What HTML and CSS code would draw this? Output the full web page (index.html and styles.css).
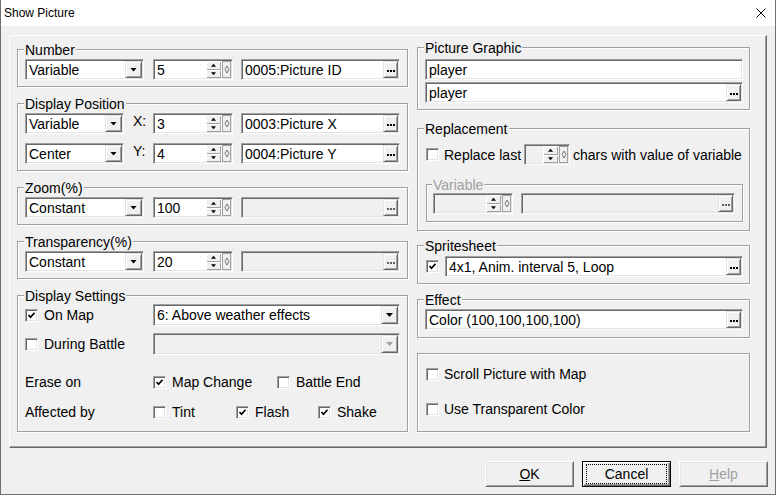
FILE: index.html
```
<!DOCTYPE html>
<html lang="en">
<head>
    <meta charset="UTF-8">
    <title>Show Picture</title>
    <link rel="stylesheet" href="styles.css">
</head>
<body>
<div class="window">
    <div class="titlebar">
        <span class="title">Show Picture</span>
        <svg class="close" width="10" height="10" viewBox="0 0 10 10"><path d="M0.5 0.5 L9.5 9.5 M9.5 0.5 L0.5 9.5" stroke="#000" stroke-width="1"/></svg>
    </div>
    <div class="client">
        <div class="panel">
            <div class="col col-left">
                <div class="group g-number">
                    <div class="group-title">Number</div>
                    <div class="row mt1">
                        <div class="field combo"><span class="text">Variable</span><span class="ddbtn"><i class="arrow"></i></span></div>
                        <div class="field spin"><span class="text">5</span><span class="spin-btns"><span class="sb"><i class="up"></i></span><span class="sb"><i class="down"></i></span></span><span class="spin-dia"><svg width="6" height="9" viewBox="0 0 6 9"><path d="M3 1 L5 4.5 L3 8 L1 4.5 Z" fill="none" stroke="#555" stroke-width="0.8"/></svg></span></div>
                        <div class="field var"><span class="text">0005:Picture ID</span><span class="dotbtn"><i class="dots"></i></span></div>
                    </div>
                </div>

                <div class="group g-position">
                    <div class="group-title">Display Position</div>
                    <div class="row mt1">
                        <div class="field combo narrow"><span class="text">Variable</span><span class="ddbtn"><i class="arrow"></i></span></div>
                        <span class="axis">X:</span>
                        <div class="field spin"><span class="text">3</span><span class="spin-btns"><span class="sb"><i class="up"></i></span><span class="sb"><i class="down"></i></span></span><span class="spin-dia"><svg width="6" height="9" viewBox="0 0 6 9"><path d="M3 1 L5 4.5 L3 8 L1 4.5 Z" fill="none" stroke="#555" stroke-width="0.8"/></svg></span></div>
                        <div class="field var"><span class="text">0003:Picture X</span><span class="dotbtn"><i class="dots"></i></span></div>
                    </div>
                    <div class="row mt9">
                        <div class="field combo narrow"><span class="text">Center</span><span class="ddbtn"><i class="arrow"></i></span></div>
                        <span class="axis">Y:</span>
                        <div class="field spin"><span class="text">4</span><span class="spin-btns"><span class="sb"><i class="up"></i></span><span class="sb"><i class="down"></i></span></span><span class="spin-dia"><svg width="6" height="9" viewBox="0 0 6 9"><path d="M3 1 L5 4.5 L3 8 L1 4.5 Z" fill="none" stroke="#555" stroke-width="0.8"/></svg></span></div>
                        <div class="field var"><span class="text">0004:Picture Y</span><span class="dotbtn"><i class="dots"></i></span></div>
                    </div>
                </div>

                <div class="group g-zoom">
                    <div class="group-title">Zoom(%)</div>
                    <div class="row mt1">
                        <div class="field combo"><span class="text">Constant</span><span class="ddbtn"><i class="arrow"></i></span></div>
                        <div class="field spin"><span class="text">100</span><span class="spin-btns"><span class="sb"><i class="up"></i></span><span class="sb"><i class="down"></i></span></span><span class="spin-dia"><svg width="6" height="9" viewBox="0 0 6 9"><path d="M3 1 L5 4.5 L3 8 L1 4.5 Z" fill="none" stroke="#555" stroke-width="0.8"/></svg></span></div>
                        <div class="field var off"><span class="text"></span><span class="dotbtn"><i class="dots"></i></span></div>
                    </div>
                </div>

                <div class="group g-trans">
                    <div class="group-title">Transparency(%)</div>
                    <div class="row mt1">
                        <div class="field combo"><span class="text">Constant</span><span class="ddbtn"><i class="arrow"></i></span></div>
                        <div class="field spin"><span class="text">20</span><span class="spin-btns"><span class="sb"><i class="up"></i></span><span class="sb"><i class="down"></i></span></span><span class="spin-dia"><svg width="6" height="9" viewBox="0 0 6 9"><path d="M3 1 L5 4.5 L3 8 L1 4.5 Z" fill="none" stroke="#555" stroke-width="0.8"/></svg></span></div>
                        <div class="field var off"><span class="text"></span><span class="dotbtn"><i class="dots"></i></span></div>
                    </div>
                </div>

                <div class="group g-display">
                    <div class="group-title">Display Settings</div>
                    <div class="row tall">
                        <label class="cb w128"><span class="check"><svg width="9" height="9" viewBox="0 0 9 9"><polyline points="1.5,4 3.5,6.3 7.5,1.8" fill="none" stroke="#000" stroke-width="1.7"/></svg></span>On Map</label>
                        <div class="field combo wide tall"><span class="text">6: Above weather effects</span><span class="ddbtn"><i class="arrow"></i></span></div>
                    </div>
                    <div class="row tall mt7">
                        <label class="cb w128"><span class="check"></span>During Battle</label>
                        <div class="field combo wide tall off"><span class="text"></span><span class="ddbtn"><i class="arrow"></i></span></div>
                    </div>
                    <div class="row tall mt16">
                        <span class="lbl w128">Erase on</span>
                        <label class="cb w124"><span class="check"><svg width="9" height="9" viewBox="0 0 9 9"><polyline points="1.5,4 3.5,6.3 7.5,1.8" fill="none" stroke="#000" stroke-width="1.7"/></svg></span>Map Change</label>
                        <label class="cb"><span class="check"></span>Battle End</label>
                    </div>
                    <div class="row tall mt8">
                        <span class="lbl w128">Affected by</span>
                        <label class="cb w83"><span class="check"></span>Tint</label>
                        <label class="cb w82"><span class="check"><svg width="9" height="9" viewBox="0 0 9 9"><polyline points="1.5,4 3.5,6.3 7.5,1.8" fill="none" stroke="#000" stroke-width="1.7"/></svg></span>Flash</label>
                        <label class="cb"><span class="check"><svg width="9" height="9" viewBox="0 0 9 9"><polyline points="1.5,4 3.5,6.3 7.5,1.8" fill="none" stroke="#000" stroke-width="1.7"/></svg></span>Shake</label>
                    </div>
                </div>
            </div>

            <div class="col col-right">
                <div class="group g-graphic">
                    <div class="group-title">Picture Graphic</div>
                    <div class="row mt3">
                        <div class="field full"><span class="text">player</span></div>
                    </div>
                    <div class="row mt2">
                        <div class="field full"><span class="text">player</span><span class="dotbtn"><i class="dots"></i></span></div>
                    </div>
                </div>

                <div class="group g-replace">
                    <div class="group-title">Replacement</div>
                    <div class="row mt7">
                        <label class="cb r ml1"><span class="check"></span>Replace last</label>
                        <div class="field spin small off"><span class="text"></span><span class="spin-btns"><span class="sb"><i class="up"></i></span><span class="sb"><i class="down"></i></span></span><span class="spin-dia"><svg width="6" height="9" viewBox="0 0 6 9"><path d="M3 1 L5 4.5 L3 8 L1 4.5 Z" fill="none" stroke="#555" stroke-width="0.8"/></svg></span></div>
                        <span class="after">chars with value of variable</span>
                    </div>
                    <div class="group sub">
                        <div class="group-title grey">Variable</div>
                        <div class="row">
                            <div class="field spin off first"><span class="text"></span><span class="spin-btns"><span class="sb"><i class="up"></i></span><span class="sb"><i class="down"></i></span></span><span class="spin-dia"><svg width="6" height="9" viewBox="0 0 6 9"><path d="M3 1 L5 4.5 L3 8 L1 4.5 Z" fill="none" stroke="#555" stroke-width="0.8"/></svg></span></div>
                            <div class="field var sub-var off"><span class="text"></span><span class="dotbtn"><i class="dots"></i></span></div>
                        </div>
                    </div>
                </div>

                <div class="group g-sprite">
                    <div class="group-title">Spritesheet</div>
                    <div class="row mt2">
                        <label class="cb r ml1"><span class="check"><svg width="9" height="9" viewBox="0 0 9 9"><polyline points="1.5,4 3.5,6.3 7.5,1.8" fill="none" stroke="#000" stroke-width="1.7"/></svg></span></label>
                        <div class="field sprite-edit"><span class="text">4x1, Anim. interval 5, Loop</span><span class="dotbtn"><i class="dots"></i></span></div>
                    </div>
                </div>

                <div class="group g-effect">
                    <div class="group-title">Effect</div>
                    <div class="row mt1">
                        <div class="field full"><span class="text">Color (100,100,100,100)</span><span class="dotbtn"><i class="dots"></i></span></div>
                    </div>
                </div>

                <div class="group g-misc">
                    <div class="row short">
                        <label class="cb r ml1"><span class="check"></span>Scroll Picture with Map</label>
                    </div>
                    <div class="row short mt19">
                        <label class="cb r ml1"><span class="check"></span>Use Transparent Color</label>
                    </div>
                </div>
            </div>
        </div>

        <div class="buttons">
            <button class="btn"><u>O</u>K</button>
            <button class="btn default"><span class="focus">Cancel</span></button>
            <button class="btn disabled"><u>H</u>elp</button>
        </div>
    </div>
</div>
</body>
</html>
```

FILE: styles.css
```
body {
    margin: 0;
    background: #f0f0f0;
    font-family: "Liberation Sans", Arial, sans-serif;
    font-size: 14px;
    color: #000;
}
.window {
    width: 776px;
    height: 495px;
    box-sizing: border-box;
    border: 1px solid #6f6f6f;
    border-top: none;
    display: flex;
    flex-direction: column;
    background: #f0f0f0;
}
.titlebar {
    flex: none;
    height: 26px;
    background: #fff;
    display: flex;
    align-items: center;
    justify-content: space-between;
    padding: 0 9px 0 3px;
    font-size: 12px;
}
.close {
    display: block;
}
.client {
    flex: 1;
    padding: 9px 0 0 8px;
}
.panel {
    width: 758px;
    height: 413px;
    box-sizing: border-box;
    border: 1px solid;
    border-color: #fff #696969 #696969 #fff;
    box-shadow: inset -1px -1px #a0a0a0;
    display: flex;
    gap: 9px;
    padding-left: 7px;
}
.col-left {
    width: 391px;
    padding-top: 13px;
}
.col-right {
    width: 333px;
    padding-top: 11px;
}

/* group boxes */
.group {
    box-sizing: border-box;
    border: 1px solid #a0a0a0;
    box-shadow: inset 1px 1px #fff, 1px 1px #fff;
    padding: 0 6px 0 7px;
    line-height: 16px;
}
.group-title {
    width: fit-content;
    height: 16px;
    margin: -8px 0 0 -1px;
    padding: 0 1px;
    background: #f0f0f0;
}
.group-title.grey {
    color: #a0a0a0;
}
.g-number { height: 38px; margin-bottom: 16px; }
.g-position { height: 68px; margin-bottom: 16px; }
.g-zoom { height: 38px; margin-bottom: 16px; }
.g-trans { height: 38px; margin-bottom: 16px; }
.g-display { height: 137px; }
.g-graphic { height: 63px; margin-bottom: 18px; }
.g-replace { height: 103px; margin-bottom: 14px; }
.g-sprite { height: 39px; margin-bottom: 15px; }
.g-effect { height: 39px; margin-bottom: 15px; }
.g-misc { height: 79px; padding-top: 12px; }
.group.sub {
    width: 317px;
    height: 38px;
    margin: 19px 0 0 1px;
    padding-left: 6px;
}

/* rows */
.row {
    display: flex;
    align-items: center;
    height: 21px;
}
.row.tall { height: 22px; }
.row.short { height: 16px; }
.mt1 { margin-top: 1px; }
.mt2 { margin-top: 2px; }
.mt3 { margin-top: 3px; }
.mt7 { margin-top: 7px; }
.mt8 { margin-top: 8px; }
.mt9 { margin-top: 9px; }
.mt16 { margin-top: 16px; }
.mt19 { margin-top: 19px; }
.ml1 { margin-left: 1px; }
.w128 { width: 128px; }
.w124 { width: 124px; }
.w83 { width: 83px; }
.w82 { width: 82px; }

/* sunken edit fields */
.field {
    box-sizing: border-box;
    height: 21px;
    border: 1px solid;
    border-color: #a0a0a0 #fff #fff #a0a0a0;
    box-shadow: inset 1px 1px #696969, inset -1px -1px #e3e3e3;
    padding: 1px;
    background: #fff;
    display: flex;
    flex: none;
}
.field.tall { height: 22px; }
.field.off { background: #f0f0f0; }
.text {
    flex: 1;
    min-width: 0;
    padding-left: 2px;
    display: flex;
    align-items: center;
    white-space: nowrap;
    overflow: hidden;
}
.combo { width: 119px; }
.combo.narrow { width: 99px; }
.combo.wide { width: 247px; }
.spin { width: 80px; margin-left: 9px; }
.spin.small { width: 46px; margin-left: 3px; }
.spin.first { margin-left: 0; }
.var { width: 159px; margin-left: 8px; }
.var.sub-var { width: 214px; }
.full { width: 318px; }
.sprite-edit { width: 298px; margin-left: 6px; }
.axis {
    width: 29px;
    box-sizing: border-box;
    padding-left: 9px;
    align-self: flex-start;
}
.axis + .spin { margin-left: 0; }
.after { margin-left: 3px; white-space: nowrap; }

/* buttons inside fields */
.ddbtn, .dotbtn {
    flex: none;
    box-sizing: border-box;
    background: #f0f0f0;
    border: 1px solid;
    border-color: #e3e3e3 #696969 #696969 #e3e3e3;
    box-shadow: inset 1px 1px #fff, inset -1px -1px #a0a0a0;
    display: flex;
    align-items: center;
    justify-content: center;
}
.ddbtn { width: 17px; }
.dotbtn { width: 15px; }
.arrow {
    width: 7px;
    height: 4px;
    background: #000;
    clip-path: polygon(0 0, 100% 0, 50% 100%);
}
.off .arrow { background: #a0a0a0; }
.dots {
    width: 2px;
    height: 2px;
    margin: 2px 6px 0 0;
    background: #000;
    box-shadow: 3px 0 #000, 6px 0 #000;
}
.off .dots {
    background: #606060;
    box-shadow: 3px 0 #606060, 6px 0 #606060;
}
.spin-btns {
    width: 15px;
    flex: none;
    display: flex;
    flex-direction: column;
}
.sb {
    flex: 1;
    background: #f0f0f0;
    box-shadow: inset 1px 1px #fff, inset -1px -1px #a0a0a0;
    display: flex;
    align-items: center;
    justify-content: center;
}
.up, .down {
    width: 5px;
    height: 3px;
    background: #000;
}
.up { clip-path: polygon(50% 0, 100% 100%, 0 100%); }
.down { clip-path: polygon(0 0, 100% 0, 50% 100%); }
.spin-dia {
    width: 9px;
    flex: none;
    margin-left: 1px;
    box-sizing: border-box;
    border: 1px solid #a0a0a0;
    background: #f0f0f0;
    display: flex;
    align-items: center;
    justify-content: center;
}
.spin-dia svg { display: block; }

/* checkboxes */
.cb {
    display: flex;
    align-items: center;
    gap: 6px;
    white-space: nowrap;
}
.cb.r { gap: 5px; }
.check {
    width: 13px;
    height: 13px;
    flex: none;
    box-sizing: border-box;
    border: 1px solid;
    border-color: #a0a0a0 #fff #fff #a0a0a0;
    box-shadow: inset 1px 1px #696969, inset -1px -1px #e3e3e3;
    padding: 1px;
    background: #fff;
}
.check svg { display: block; }

/* dialog buttons */
.buttons {
    display: flex;
    justify-content: flex-end;
    gap: 8px;
    padding-right: 7px;
    margin-top: 13px;
}
.btn {
    width: 89px;
    height: 26px;
    box-sizing: border-box;
    padding: 0;
    font: 14px "Liberation Sans", Arial, sans-serif;
    color: #000;
    background: #f0f0f0;
    border: 1px solid;
    border-color: #fff #696969 #696969 #fff;
    box-shadow: inset 1px 1px #e3e3e3, inset -1px -1px #a0a0a0;
}
.btn.default {
    border: 1px solid #000;
    box-shadow: inset 1px 1px #fff, inset -1px -1px #696969, inset -2px -2px #a0a0a0;
}
.btn.disabled {
    color: #a0a0a0;
}
.focus {
    display: block;
    height: 18px;
    margin: 0 3px;
    border: 1px dotted #000;
    line-height: 18px;
}
```
